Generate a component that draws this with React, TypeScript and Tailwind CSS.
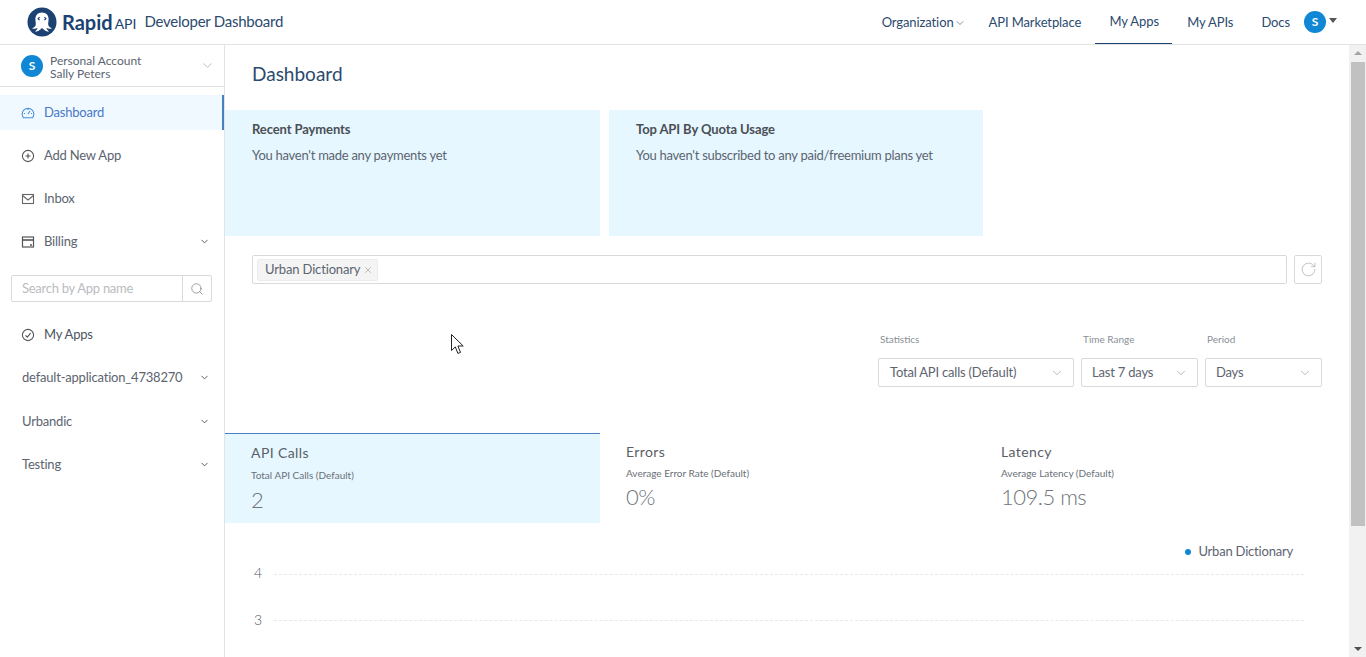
import React from "react";
import { ChevronDown, Search, RotateCw, X } from "lucide-react";

function Avatar({ size }: { size: string }) {
  return <div className={`${size} rounded-full bg-[#0f87d5] text-white flex items-center justify-center text-[12px] font-bold`}>S</div>;
}

function Logo() {
  return (
    <svg width="30" height="30" viewBox="0 0 30 30" className="shrink-0">
      <circle cx="15" cy="15" r="14.5" fill="#1b4272" />
      <path d="M15 5.5c-4 0-6.6 2.8-6.6 6.5 0 2.6.7 4.3.3 6-.4 1.7-2 2.8-3.7 3.2 1.8.9 4 .7 5.6-.5-.4 1.7-1.5 3-2.7 3.8 2.5 0 4.9-1.2 7.1-3.6 2.2 2.4 4.6 3.6 7.1 3.6-1.2-.8-2.3-2.1-2.7-3.8 1.6 1.2 3.8 1.4 5.6.5-1.7-.4-3.3-1.5-3.7-3.2-.4-1.7.3-3.4.3-6 0-3.700-2.600-6.500-6.600-6.500z" fill="#fff" />
      <path d="M12.600 10.200l-1.500 1.500 1.500 1.500M17.400 10.200l1.500 1.500-1.500 1.500" stroke="#1b4272" strokeWidth="1.200" fill="none" />
    </svg>
  );
}

function GaugeIcon() {
  return (
    <svg width="14" height="14" viewBox="0 0 14 14" fill="none" stroke="#4a90d9" strokeWidth="1.100">
      <path d="M2.500 11.800A5.800 5.800 0 1 1 11.500 11.800z" />
      <path d="M7 8l2-3" />
      <path d="M3 7.500h1M10 7.500h1M7 3v1" />
    </svg>
  );
}

function PlusCircle() {
  return (
    <svg width="14" height="14" viewBox="0 0 14 14" fill="none" stroke="#555" strokeWidth="1.100">
      <circle cx="7" cy="7" r="5.600" />
      <path d="M4.500 7h5M7 4.500v5" />
    </svg>
  );
}

function MailIcon() {
  return (
    <svg width="14" height="14" viewBox="0 0 14 14" fill="none" stroke="#666" strokeWidth="1.100">
      <rect x="1.500" y="2.500" width="11" height="9" />
      <path d="M1.500 3.500L7 8l5.500-4.500" />
    </svg>
  );
}

function BillingIcon() {
  return (
    <svg width="14" height="14" viewBox="0 0 14 14" fill="none" stroke="#555" strokeWidth="1.200">
      <rect x="1.500" y="2" width="11" height="10" />
      <path d="M1.500 5h11" strokeWidth="1.600" />
      <path d="M9 10h2" strokeWidth="1.600" />
    </svg>
  );
}

function CheckCircleIcon() {
  return (
    <svg width="14" height="14" viewBox="0 0 14 14" fill="none" stroke="#555" strokeWidth="1.100">
      <circle cx="7" cy="7" r="5.600" />
      <path d="M4.500 7.300l1.800 1.800 3.300-4" />
    </svg>
  );
}

function Caret() {
  return <ChevronDown size={11} strokeWidth={2} className="text-[#555]" />;
}

function NavRow({ icon, label, caret, active, bold }: { icon?: React.ReactNode; label: string; caret?: boolean; active?: boolean; bold?: boolean }) {
  return (
    <div className={`h-[35px] flex items-center ${icon ? "pl-[21px]" : "pl-[22px]"} pr-[14px] text-[13px] tracking-[-0.2px] ${active ? "bg-[#f0f9ff] border-r-2 border-[#4a7fc0] text-[#4a78c8]" : bold ? "text-[#4d5560]" : "text-[#5c6470]"}`}>
      {icon && <span className="w-[23px] flex shrink-0">{icon}</span>}
      <span className="flex-1 whitespace-nowrap pt-[1px]">{label}</span>
      {caret && <Caret />}
    </div>
  );
}

function SelectBox({ label, value, width, pad }: { label: string; value: string; width: string; pad: string }) {
  return (
    <div className={`${width} flex flex-col`}>
      <div className="text-[10px] leading-[12px] text-[#8a8f96] pl-[2px] h-[25px]">{label}</div>
      <div className={`h-[29px] border border-[#d9d9d9] rounded-[2px] flex items-center justify-between ${pad} pr-[9px] text-[13px] tracking-[-0.2px] text-[#5c6470] bg-white`}>
        <span className="whitespace-nowrap pt-[1px]">{value}</span>
        <ChevronDown size={14} strokeWidth={1} className="text-[#8a8a8a]" />
      </div>
    </div>
  );
}

function Tab({ title, sub, value, active, grow }: { title: string; sub: string; value: string; active?: boolean; grow?: boolean }) {
  return (
    <div className={`${grow ? "flex-1" : "w-[375px]"} h-[90px] ${active ? "bg-[#e6f7ff] border-t border-[#4a7fc0]" : ""} pt-[10px] pl-[26px]`}>
      <div className="text-[14px] leading-[18px] tracking-[0.4px] text-[#5a6068]">{title}</div>
      <div className={`text-[10px] leading-[14px] text-[#6a7078] ${active ? "mt-[6px]" : "mt-[5px]"}`}>{sub}</div>
      <div className={`text-[22px] leading-[28px] tracking-[-0.5px] font-light text-[#6f757c] ${active ? "mt-[4px]" : "mt-[3px]"}`}>{value}</div>
    </div>
  );
}

export default function App() {
  return (
    <div className="relative h-[657px] w-[1366px] overflow-hidden bg-white flex flex-col font-['Lato',sans-serif]">
      <header className="h-[45px] shrink-0 border-b border-[#e3e3e3] flex items-center pl-[27px] pr-[29px]">
        <Logo />
        <span className="ml-[5px] text-[20px] font-bold text-[#1b4272] leading-none">Rapid</span>
        <span className="ml-[2px] text-[14px] text-[#1b4272] leading-none mt-[3px]">API</span>
        <span className="ml-[8px] text-[15px] tracking-[-0.25px] text-[#2c4a6e] whitespace-nowrap pb-[1px]">Developer Dashboard</span>
        <nav className="ml-auto flex items-center h-full text-[13px] tracking-[-0.1px] text-[#2c4a6e]">
          <div className="flex items-center pt-[1px]">Organization<ChevronDown size={12} strokeWidth={1.200} /></div>
          <div className="ml-[23px] pt-[1px]">API Marketplace</div>
          <div className="ml-[14px] w-[77px] justify-center h-full flex items-center border-b border-[#1b4272] pt-[1px] pl-[1px]">My Apps</div>
          <div className="ml-[15px] pt-[1px]">My APIs</div>
          <div className="ml-[28px] pt-[1px]">Docs</div>
          <div className="ml-[14px] flex items-start">
            <Avatar size="w-[22px] h-[22px]" />
            <span className="ml-[3px] mt-[7px] w-0 h-0 border-x-[4.500px] border-x-transparent border-t-[5px] border-t-[#555]" />
          </div>
        </nav>
      </header>

      <div className="flex-1 flex min-h-0">
        <aside className="w-[225px] shrink-0 border-r border-[#e3e3e3] flex flex-col">
          <div className="h-[42px] border-b border-[#e3e3e3] flex items-center pl-[21px] pr-[9px]">
            <Avatar size="w-[22px] h-[22px]" />
            <div className="ml-[7px] flex-1 text-[12px] leading-[13px] text-[#5c6470] pt-[2px]">
              <div>Personal Account</div>
              <div>Sally Peters</div>
            </div>
            <ChevronDown size={15} strokeWidth={1} className="text-[#9a9a9a]" />
          </div>
          <div className="mt-[8px] flex flex-col gap-2">
            <NavRow active icon={<GaugeIcon />} label="Dashboard" />
            <NavRow icon={<PlusCircle />} label="Add New App" />
            <NavRow icon={<MailIcon />} label="Inbox" />
            <NavRow icon={<BillingIcon />} label="Billing" caret />
          </div>
          <div className="mt-[16px] mx-[11px] h-[27px] border border-[#d9d9d9] rounded-[2px] flex items-center w-[201px]">
            <span className="flex-1 pl-[10px] pt-[1px] text-[13px] tracking-[-0.27px] text-[#b9bcc0] whitespace-nowrap">Search by App name</span>
            <span className="w-[29px] h-full border-l border-[#d9d9d9] flex items-center justify-center">
              <Search size={14} strokeWidth={1.200} className="text-[#777]" />
            </span>
          </div>
          <div className="mt-[15px] flex flex-col gap-2">
            <NavRow bold icon={<CheckCircleIcon />} label="My Apps" />
            <NavRow label="default-application_4738270" caret />
          </div>
          <div className="mt-[9px] flex flex-col gap-2">
            <NavRow label="Urbandic" caret />
            <NavRow label="Testing" caret />
          </div>
        </aside>

        <main className="flex-1 min-w-0 overflow-hidden flex flex-col">
          <h1 className="pl-[27px] h-[65px] pt-[16px] text-[19px] leading-[26px] text-[#2c4a6e] shrink-0">Dashboard</h1>
          <div className="flex gap-[9px] shrink-0">
            <div className="w-[375px] h-[126px] bg-[#e6f7ff] pl-[27px] pt-[11px]">
              <div className="text-[13px] leading-[16px] font-bold tracking-[-0.1px] text-[#4a4f55]">Recent Payments</div>
              <div className="text-[13px] leading-[16px] tracking-[-0.27px] text-[#5c6470] mt-[10px]">You haven't made any payments yet</div>
            </div>
            <div className="w-[374px] h-[126px] bg-[#e6f7ff] pl-[27px] pt-[11px]">
              <div className="text-[13px] leading-[16px] font-bold tracking-[-0.1px] text-[#4a4f55]">Top API By Quota Usage</div>
              <div className="text-[13px] leading-[16px] tracking-[-0.27px] text-[#5c6470] mt-[10px]">You haven't subscribed to any paid/freemium plans yet</div>
            </div>
          </div>
          <div className="mt-[19px] pl-[27px] pr-[27px] flex gap-[7px] shrink-0">
            <div className="flex-1 h-[29px] border border-[#d9d9d9] rounded-[2px] flex items-center pl-[4px]">
              <span className="h-[22px] bg-[#f4f4f4] border border-[#ececec] rounded-[2px] flex items-center pl-[7px] pr-[4px] pt-[1px] text-[13px] tracking-[-0.15px] text-[#5c6470]">
                Urban Dictionary
                <X size={10} strokeWidth={1.300} className="ml-[3px] text-[#888]" />
              </span>
            </div>
            <div className="w-[28px] h-[29px] border border-[#d9d9d9] rounded-[2px] flex items-center justify-center">
              <RotateCw size={17} strokeWidth={1} className="text-[#aaa]" />
            </div>
          </div>
          <div className="mt-[49px] pr-[27px] flex justify-end gap-[7px] shrink-0">
            <SelectBox label="Statistics" value="Total API calls (Default)" width="w-[196px]" pad="pl-[11px]" />
            <SelectBox label="Time Range" value="Last 7 days" width="w-[117px]" pad="pl-[10px]" />
            <SelectBox label="Period" value="Days" width="w-[117px]" pad="pl-[10px]" />
          </div>
          <div className="mt-[46px] flex shrink-0">
            <Tab active title="API Calls" sub="Total API Calls (Default)" value="2" />
            <Tab title="Errors" sub="Average Error Rate (Default)" value="0%" />
            <Tab grow title="Latency" sub="Average Latency (Default)" value="109.5 ms" />
          </div>
          <div className="pl-[29px] pr-[45px] shrink-0">
            <div className="mt-[21px] flex justify-end items-center h-[16px] pr-[11px] text-[13px] tracking-[-0.2px] text-[#5c6470]">
              <span className="w-[6px] h-[6px] rounded-full bg-[#0f87d5] mr-[7px]" />
              Urban Dictionary
            </div>
            <div className="mt-[2px] flex flex-col gap-[22px]">
              {["4", "3"].map((n) => (
                <div key={n} className="h-[24px] flex items-center">
                  <span className={`w-[20px] text-[14px] font-light text-[#555b62] ${n === "4" ? "pb-[3px]" : "pb-[1px]"}`}>{n}</span>
                  <span className="flex-1 border-t border-dashed border-[#e8e8e8]" />
                </div>
              ))}
            </div>
          </div>
        </main>

        <div className="w-[17px] shrink-0 bg-[#f1f1f1] flex flex-col items-center justify-between py-[6px]">
          <span className="w-0 h-0 border-x-[4px] border-x-transparent border-b-[4px] border-b-[#a3a3a3]" />
          <span className="absolute top-[62px] right-[1px] w-[14px] h-[464px] bg-[#c1c1c1]" />
          <span className="w-0 h-0 border-x-[4px] border-x-transparent border-t-[4px] border-t-[#505050]" />
        </div>
      </div>

      <svg className="absolute left-[451px] top-[334px]" width="13" height="21" viewBox="0 0 13 21">
        <path d="M.500.500v16l3.800-3.600 2.600 6.500 2.600-1-2.600-6.400h5.300z" fill="#fff" stroke="#222" strokeWidth="1" />
      </svg>
    </div>
  );
}
